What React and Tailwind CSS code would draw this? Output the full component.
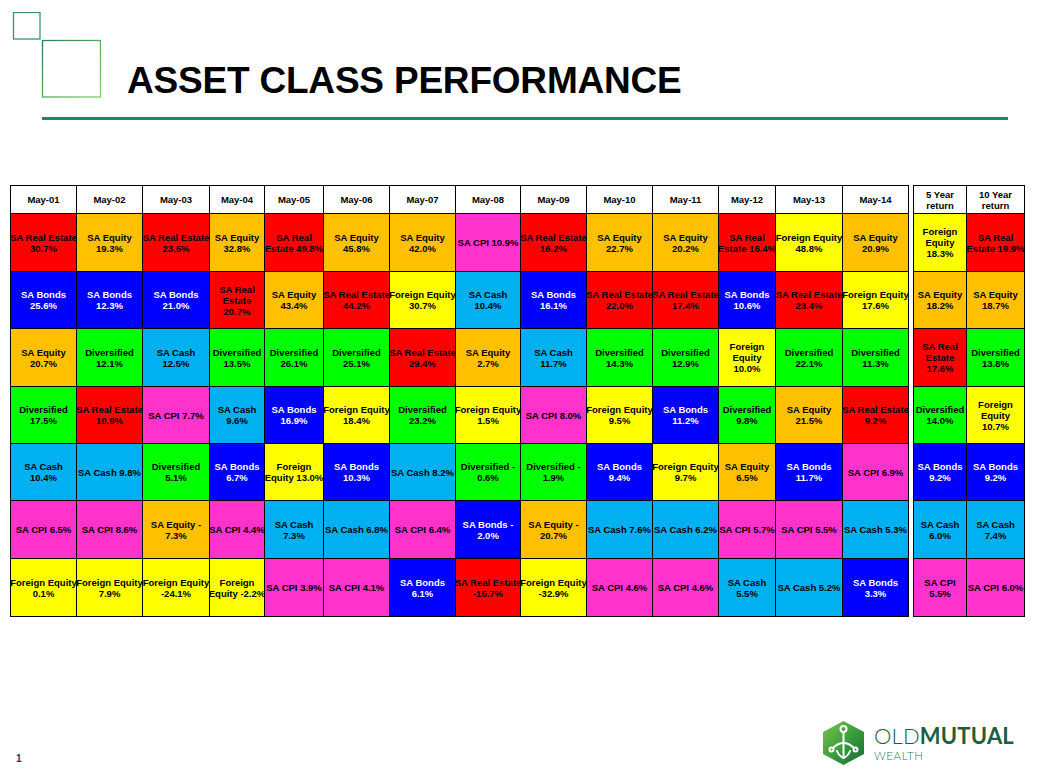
import React from "react";

const COLORS = {
  R: "bg-[#ff0000] text-black",
  O: "bg-[#ffc000] text-black",
  Y: "bg-[#ffff00] text-black",
  G: "bg-[#00ff00] text-black",
  B: "bg-[#0000ff] text-white",
  C: "bg-[#00b0f0] text-black",
  P: "bg-[#ff33cc] text-black",
};

const YEARS = [
  "May-01", "May-02", "May-03", "May-04", "May-05", "May-06", "May-07",
  "May-08", "May-09", "May-10", "May-11", "May-12", "May-13", "May-14",
];

// each row: 14 yearly cells + 2 return cells, "|" marks a line break
const ROWS = [
  [
    ["R", "SA Real Estate|30.7%"], ["O", "SA Equity|19.3%"], ["R", "SA Real Estate|23.5%"],
    ["O", "SA Equity|32.8%"], ["R", "SA Real|Estate 49.8%"], ["O", "SA Equity|45.8%"],
    ["O", "SA Equity|42.0%"], ["P", "SA CPI 10.9%"], ["R", "SA Real Estate|16.2%"],
    ["O", "SA Equity|22.7%"], ["O", "SA Equity|20.2%"], ["R", "SA Real|Estate 16.4%"],
    ["Y", "Foreign Equity|48.8%"], ["O", "SA Equity|20.9%"],
    ["Y", "Foreign|Equity|18.3%"], ["R", "SA Real|Estate 19.9%"],
  ],
  [
    ["B", "SA Bonds|25.6%"], ["B", "SA Bonds|12.3%"], ["B", "SA Bonds|21.0%"],
    ["R", "SA Real|Estate|20.7%"], ["O", "SA Equity|43.4%"], ["R", "SA Real Estate|44.2%"],
    ["Y", "Foreign Equity|30.7%"], ["C", "SA Cash|10.4%"], ["B", "SA Bonds|16.1%"],
    ["R", "SA Real Estate|22.0%"], ["R", "SA Real Estate|17.4%"], ["B", "SA Bonds|10.6%"],
    ["R", "SA Real Estate|23.4%"], ["Y", "Foreign Equity|17.6%"],
    ["O", "SA Equity|18.2%"], ["O", "SA Equity|18.7%"],
  ],
  [
    ["O", "SA Equity|20.7%"], ["G", "Diversified|12.1%"], ["C", "SA Cash|12.5%"],
    ["G", "Diversified|13.5%"], ["G", "Diversified|26.1%"], ["G", "Diversified|25.1%"],
    ["R", "SA Real Estate|29.4%"], ["O", "SA Equity|2.7%"], ["C", "SA Cash|11.7%"],
    ["G", "Diversified|14.3%"], ["G", "Diversified|12.9%"], ["Y", "Foreign|Equity|10.0%"],
    ["G", "Diversified|22.1%"], ["G", "Diversified|11.3%"],
    ["R", "SA Real|Estate|17.6%"], ["G", "Diversified|13.8%"],
  ],
  [
    ["G", "Diversified|17.5%"], ["R", "SA Real Estate|10.9%"], ["P", "SA CPI 7.7%"],
    ["C", "SA Cash|9.6%"], ["B", "SA Bonds|16.9%"], ["Y", "Foreign Equity|18.4%"],
    ["G", "Diversified|23.2%"], ["Y", "Foreign Equity|1.5%"], ["P", "SA CPI 8.0%"],
    ["Y", "Foreign Equity|9.5%"], ["B", "SA Bonds|11.2%"], ["G", "Diversified|9.8%"],
    ["O", "SA Equity|21.5%"], ["R", "SA Real Estate|9.2%"],
    ["G", "Diversified|14.0%"], ["Y", "Foreign|Equity|10.7%"],
  ],
  [
    ["C", "SA Cash|10.4%"], ["C", "SA Cash 9.8%"], ["G", "Diversified|5.1%"],
    ["B", "SA Bonds|6.7%"], ["Y", "Foreign|Equity 13.0%"], ["B", "SA Bonds|10.3%"],
    ["C", "SA Cash 8.2%"], ["G", "Diversified -|0.6%"], ["G", "Diversified -|1.9%"],
    ["B", "SA Bonds|9.4%"], ["Y", "Foreign Equity|9.7%"], ["O", "SA Equity|6.5%"],
    ["B", "SA Bonds|11.7%"], ["P", "SA CPI 6.9%"],
    ["B", "SA Bonds|9.2%"], ["B", "SA Bonds|9.2%"],
  ],
  [
    ["P", "SA CPI 6.5%"], ["P", "SA CPI 8.6%"], ["O", "SA Equity -|7.3%"],
    ["P", "SA CPI 4.4%"], ["C", "SA Cash|7.3%"], ["C", "SA Cash 6.8%"],
    ["P", "SA CPI 6.4%"], ["B", "SA Bonds -|2.0%"], ["O", "SA Equity -|20.7%"],
    ["C", "SA Cash 7.6%"], ["C", "SA Cash 6.2%"], ["P", "SA CPI 5.7%"],
    ["P", "SA CPI 5.5%"], ["C", "SA Cash 5.3%"],
    ["C", "SA Cash|6.0%"], ["C", "SA Cash|7.4%"],
  ],
  [
    ["Y", "Foreign Equity|0.1%"], ["Y", "Foreign Equity|7.9%"], ["Y", "Foreign Equity|-24.1%"],
    ["Y", "Foreign|Equity -2.2%"], ["P", "SA CPI 3.9%"], ["P", "SA CPI 4.1%"],
    ["B", "SA Bonds|6.1%"], ["R", "SA Real Estate|-15.7%"], ["Y", "Foreign Equity|-32.9%"],
    ["P", "SA CPI 4.6%"], ["P", "SA CPI 4.6%"], ["C", "SA Cash|5.5%"],
    ["C", "SA Cash 5.2%"], ["B", "SA Bonds|3.3%"],
    ["P", "SA CPI|5.5%"], ["P", "SA CPI 6.0%"],
  ],
];

function Lines({ text }) {
  const parts = text.split("|");
  return parts.map((p, i) => (
    <React.Fragment key={i}>
      {p}
      {i < parts.length - 1 && <br />}
    </React.Fragment>
  ));
}

function Cell({ color, text }) {
  return (
    <div
      className={`flex items-center justify-center border-r border-b border-black text-center whitespace-nowrap text-[9.5px] leading-[11px] font-bold ${COLORS[color]}`}
    >
      <span>
        <Lines text={text} />
      </span>
    </div>
  );
}

function HeadCell({ text }) {
  return (
    <div className="flex items-center justify-center border-r border-b border-black bg-white text-center whitespace-nowrap text-[9.5px] leading-[11px] font-bold text-black">
      <span>
        <Lines text={text} />
      </span>
    </div>
  );
}

function Logo() {
  return (
    <div className="flex items-center gap-[10px]">
      <svg width="41" height="44" viewBox="0 0 41 44">
        <defs>
          <linearGradient id="hexg" x1="0" y1="0" x2="1" y2="1">
            <stop offset="0" stopColor="#7cc547" />
            <stop offset="0.5" stopColor="#3c9e3c" />
            <stop offset="1" stopColor="#16693a" />
          </linearGradient>
        </defs>
        <polygon points="20.5,0 41,11 41,33 20.5,44 0,33 0,11" fill="url(#hexg)" />
        <g fill="none" stroke="#ffffff" strokeWidth="2" strokeLinecap="round">
          <circle cx="20.5" cy="8" r="3" />
          <path d="M20.5 11 V37" />
          <path d="M20.5 22 C16 22 13 24 10 27" />
          <path d="M20.5 22 C25 22 28 24 31 27" />
          <circle cx="8.5" cy="28.5" r="2" />
          <circle cx="32.5" cy="28.5" r="2" />
          <path d="M14 30 C16 35 20.5 37 20.5 37 C20.5 37 25 35 27 30" />
        </g>
      </svg>
      <div className="flex flex-col font-['Lato','Liberation_Sans',sans-serif] text-[#1d5e3c]">
        <div className="text-[22px] leading-[22px] tracking-[0.2px]">
          <span className="font-light">OLD</span>
          <span className="font-bold">MUTUAL</span>
        </div>
        <div className="mt-[3px] text-[11.5px] leading-[12px] font-light tracking-[0.6px] text-[#2f7d4c]">
          WEALTH
        </div>
      </div>
    </div>
  );
}

export default function App() {
  return (
    <div className="w-[1038px] h-[779px] bg-white overflow-hidden font-['Liberation_Sans',Arial,sans-serif]">
      {/* Title with corner squares */}
      <div className="flex">
        <svg width="89" height="86" className="ml-[12px] mt-[12px] shrink-0">
          <defs>
            <linearGradient id="sq" x1="0" y1="0" x2="1" y2="1">
              <stop offset="0" stopColor="#2f7a5c" />
              <stop offset="1" stopColor="#86d160" />
            </linearGradient>
          </defs>
          <rect x="1.5" y="0.5" width="26.5" height="26.5" fill="none" stroke="#3f8f7a" strokeWidth="1.3" />
          <rect x="30.5" y="28.5" width="58" height="56.5" fill="none" stroke="url(#sq)" strokeWidth="1.3" />
        </svg>
        <h1 className="ml-[26px] mt-[62px] text-[37px] leading-[37px] font-bold text-black tracking-[-0.2px]">
          ASSET CLASS PERFORMANCE
        </h1>
      </div>
      <div className="mt-[18px] ml-[42px] w-[966px] h-[3px] bg-[#178a62]" />

      {/* Performance tables */}
      <div className="mt-[65px] ml-[10px] flex gap-[4px]">
        <div className="grid grid-cols-[66px_66px_67px_55px_59px_66px_66px_65px_66px_66px_66px_57px_67px_66px] grid-rows-[28px_58px_57px_58px_57px_57px_58px_58px] border-l border-t border-black">
          {YEARS.map((y) => (
            <HeadCell key={y} text={y} />
          ))}
          {ROWS.map((row, r) =>
            row.slice(0, 14).map(([c, t], i) => (
              <Cell key={`${r}-${i}`} color={c} text={t} />
            )),
          )}
        </div>
        <div className="grid grid-cols-[53px_58px] grid-rows-[28px_58px_57px_58px_57px_57px_58px_58px] border-l border-t border-black">
          <HeadCell text="5 Year|return" />
          <HeadCell text="10 Year|return" />
          {ROWS.map((row, r) =>
            row.slice(14).map(([c, t], i) => (
              <Cell key={`ret-${r}-${i}`} color={c} text={t} />
            )),
          )}
        </div>
      </div>

      {/* Footer */}
      <div className="mt-[104px] flex items-end justify-between pr-[24px]">
        <span className="ml-[16px] mb-[1px] text-[10px] leading-none font-bold text-[#1f3864]">
          1
        </span>
        <Logo />
      </div>
    </div>
  );
}
